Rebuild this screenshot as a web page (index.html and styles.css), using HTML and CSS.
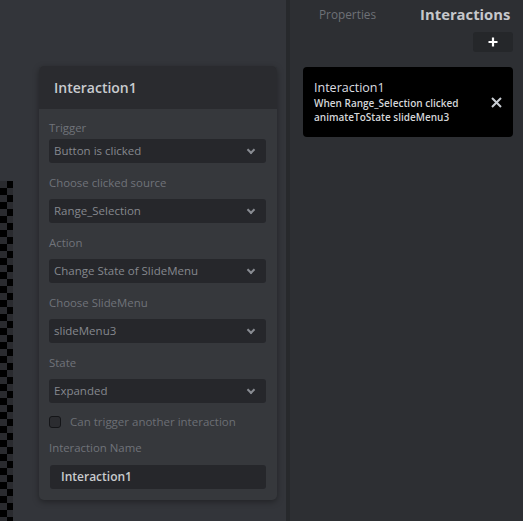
FILE: index.html
```html
<!DOCTYPE html>
<html lang="en">
<head>
  <meta charset="UTF-8">
  <meta name="viewport" content="width=device-width, initial-scale=1.0">
  <title>Interactions</title>
  <link rel="stylesheet" href="styles.css">
</head>
<body>
  <div class="app">
    <!-- Canvas with editor popup -->
    <div class="canvas">
      <div class="checker"></div>
      <div class="editor">
        <div class="editor-header">Interaction1</div>
        <div class="editor-body">
          <div class="field field-first">
            <label>Trigger</label>
            <div class="select">Button is clicked<span class="chevron"></span></div>
          </div>
          <div class="field">
            <label>Choose clicked source</label>
            <div class="select">Range_Selection<span class="chevron"></span></div>
          </div>
          <div class="field">
            <label>Action</label>
            <div class="select">Change State of SlideMenu<span class="chevron"></span></div>
          </div>
          <div class="field">
            <label>Choose SlideMenu</label>
            <div class="select">slideMenu3<span class="chevron"></span></div>
          </div>
          <div class="field">
            <label>State</label>
            <div class="select">Expanded<span class="chevron"></span></div>
          </div>
          <div class="check-row">
            <span class="checkbox"></span>
            <span>Can trigger another interaction</span>
          </div>
          <div class="field field-name">
            <label>Interaction Name</label>
            <div class="name-input">Interaction1</div>
          </div>
        </div>
      </div>
    </div>

    <div class="divider"></div>

    <!-- Sidebar -->
    <div class="sidebar">
      <div class="tabs">
        <div class="tab">Properties</div>
        <div class="tab active">Interactions</div>
      </div>
      <div class="add-btn">
        <svg width="10" height="10" viewBox="0 0 10 10"><path d="M5 0.5v9M0.5 5h9" stroke="#fff" stroke-width="2.2"/></svg>
      </div>
      <div class="interaction-card">
        <div class="interaction-text">
          <div class="interaction-title">Interaction1</div>
          <div class="interaction-desc">When Range_Selection clicked</div>
          <div class="interaction-desc">animateToState slideMenu3</div>
        </div>
        <svg class="close" width="11" height="11" viewBox="0 0 11 11"><path d="M1 1l9 9M10 1l-9 9" stroke="#c9cdd3" stroke-width="2"/></svg>
      </div>
    </div>
  </div>
</body>
</html>
```

FILE: styles.css
```css
/* Global */
body {
  margin: 0;
  padding: 0;
  font-family: 'Open Sans', 'Noto Sans', sans-serif;
  background-color: #33353a;
  overflow: hidden;
}
.app {
  display: flex;
  width: 523px;
  height: 521px;
}

/* Canvas */
.canvas {
  display: flex;
  align-items: flex-start;
  width: 286px;
  flex: none;
  background-color: #33353a;
}
.checker {
  width: 13px;
  height: 340px;
  margin-top: 181px;
  flex: none;
  background: repeating-conic-gradient(#000 0 25%, #2a2b2f 0 50%) 0 0 / 14px 14px;
}
.editor {
  width: 238px;
  margin-left: 26px;
  margin-top: 66px;
  border-radius: 5px;
  overflow: hidden;
  background-color: #36383c;
  box-shadow: 0 2px 6px rgba(0, 0, 0, 0.35);
}
.editor-header {
  height: 43px;
  line-height: 43px;
  padding-left: 15px;
  background-color: #2a2b2f;
  color: #c9cbcf;
  font-size: 14px;
  font-weight: 600;
}
.editor-body {
  padding: 11px 11px 11px 10px;
}
.field {
  margin-top: 12px;
}
.field label {
  display: block;
  line-height: 15px;
  font-size: 11.4px;
  color: #70737a;
  margin-bottom: 9px;
}
.field-first {
  margin-top: 0;
}
.field-first label {
  margin-bottom: 4px;
}
.select {
  position: relative;
  height: 24px;
  line-height: 24px;
  padding-left: 5px;
  border-radius: 3px;
  background-color: #26272b;
  color: #85888e;
  font-size: 11.5px;
}
.chevron {
  position: absolute;
  right: 12px;
  top: 8px;
  width: 4px;
  height: 4px;
  border-right: 2px solid #888b91;
  border-bottom: 2px solid #888b91;
  transform: rotate(45deg);
}
.check-row {
  display: flex;
  align-items: center;
  gap: 9px;
  height: 15px;
  margin-top: 11px;
  font-size: 11.5px;
  color: #6c6f75;
}
.checkbox {
  width: 10px;
  height: 10px;
  border: 1.5px solid #141518;
  border-radius: 3px;
  background-color: #2b2c30;
}
.field-name {
  margin-top: 11px;
}
.field-name label {
  margin-bottom: 10px;
}
.name-input {
  height: 24px;
  line-height: 24px;
  margin-left: 1px;
  padding-left: 11px;
  border-radius: 3px;
  background-color: #26272b;
  color: #c9cbce;
  font-size: 12px;
  font-weight: 600;
}

.divider {
  width: 4px;
  flex: none;
  background-color: #27292c;
}

/* Sidebar */
.sidebar {
  flex: 1;
  display: flex;
  flex-direction: column;
  background-color: #2d2f33;
}
.tabs {
  display: flex;
  align-items: center;
  gap: 44px;
  height: 28px;
  padding-left: 29px;
}
.tab {
  font-size: 11.8px;
  color: #6e7177;
}
.tab.active {
  font-size: 14.8px;
  font-weight: 700;
  color: #c6c8cc;
}
.add-btn {
  align-self: flex-end;
  display: flex;
  align-items: center;
  justify-content: center;
  width: 40px;
  height: 20px;
  margin-top: 4px;
  margin-right: 10px;
  border-radius: 3px;
  background-color: #25272a;
}
.interaction-card {
  display: flex;
  align-items: center;
  justify-content: space-between;
  margin: 15px 10px 0 13px;
  padding: 13px 11px 13px 11px;
  border-radius: 4px;
  background-color: #000;
}
.interaction-title {
  font-size: 12.5px;
  line-height: 16px;
  color: #dcdde0;
}
.interaction-desc {
  font-size: 10px;
  line-height: 14px;
  font-weight: 600;
  color: #d4d6d9;
}
```
